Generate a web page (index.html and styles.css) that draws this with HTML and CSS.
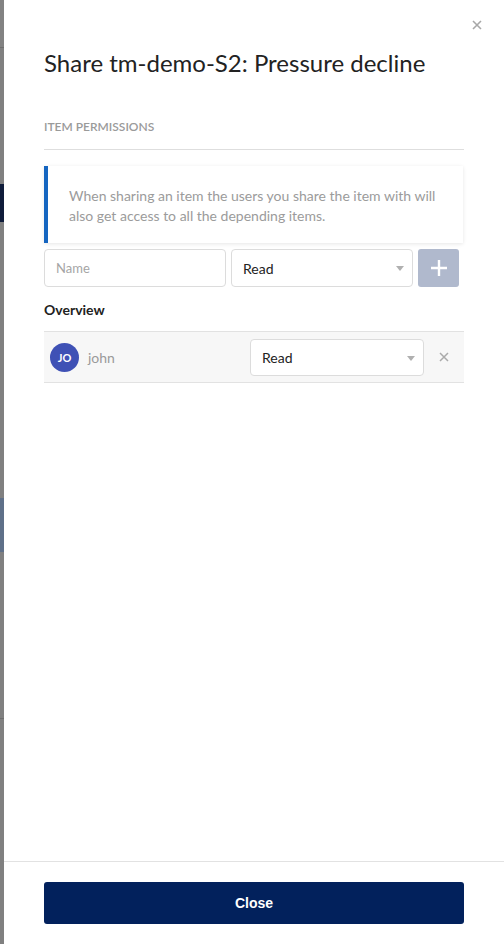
FILE: index.html
```html
<!DOCTYPE html>
<html>
<head>
<meta charset="utf-8">
<link rel="stylesheet" href="styles.css">
</head>
<body>
<div class="page">
  <div class="backdrop">
    <div class="bd-seg bd-top"></div>
    <div class="bd-line"></div>
    <div class="bd-seg bd-a"></div>
    <div class="bd-navy"></div>
    <div class="bd-seg bd-b"></div>
    <div class="bd-blue"></div>
    <div class="bd-seg bd-c"></div>
    <div class="bd-line"></div>
    <div class="bd-seg bd-fill"></div>
  </div>
  <div class="panel">
    <button class="x-close" aria-label="Close">
      <svg width="10" height="10" viewBox="0 0 10 10"><path d="M1 1L9 9M9 1L1 9" stroke="#a8a8a8" stroke-width="1.6"/></svg>
    </button>
    <div class="body">
      <h1 class="title">Share tm-demo-S2: Pressure decline</h1>
      <div class="section-label">ITEM PERMISSIONS</div>
      <div class="info">When sharing an item the users you share the item with will also get access to all the depending items.</div>
      <div class="add-row">
        <div class="input placeholder">Name</div>
        <div class="input select">Read<span class="caret"></span></div>
        <div class="add-btn">
          <svg width="18" height="18" viewBox="0 0 18 18"><path d="M9 1V17M1 9H17" stroke="#fff" stroke-width="2.4"/></svg>
        </div>
      </div>
      <div class="overview">Overview</div>
      <div class="user-row">
        <div class="avatar">JO</div>
        <div class="user-name">john</div>
        <div class="input select small">Read<span class="caret"></span></div>
        <div class="remove">
          <svg width="10" height="10" viewBox="0 0 10 10"><path d="M1 1L9 9M9 1L1 9" stroke="#aaa" stroke-width="1.5"/></svg>
        </div>
      </div>
    </div>
    <div class="footer">
      <button class="close-btn">Close</button>
    </div>
  </div>
</div>
</body>
</html>
```
FILE: styles.css
```css
* { box-sizing: border-box; }
html, body { margin: 0; padding: 0; }
body { font-family: Lato, "Open Sans", sans-serif; background: #fff; }
.page { display: flex; width: 504px; height: 944px; overflow: hidden; }
.backdrop { width: 4px; display: flex; flex-direction: column; background: #808080; }
.bd-top { height: 47px; background: #828282; }
.bd-line { height: 1px; background: #6e6e6e; }
.bd-a { height: 136px; background: #808080; }
.bd-navy { height: 38px; background: #0f1c3a; }
.bd-b { height: 276px; background: #808080; }
.bd-blue { height: 54px; background: #5f7089; }
.bd-c { height: 166px; background: #808080; }
.bd-fill { flex: 1; background: #808080; }
.panel { flex: 1; display: flex; flex-direction: column; position: relative; background: #fff; }
.x-close { position: absolute; top: 20px; right: 22px; border: 0; background: none; padding: 0; width: 10px; height: 10px; display: flex; }
.body { flex: 1; padding: 48px 40px 0 40px; }
.title { margin: 0; font-size: 24px; font-weight: 400; color: #222; line-height: 30px; }
.section-label { margin-top: 42px; font-size: 12px; font-weight: 600; color: #9a9a9a; padding-bottom: 15px; border-bottom: 1px solid #dedede; line-height: 14px; }
.info { margin-top: 16px; margin-right: 1px; border-left: 4px solid #1565c0; box-shadow: 0 1px 4px rgba(0,0,0,0.10); padding: 20px 20px 17px 21px; font-size: 14px; line-height: 20px; color: #9b9b9b; }
.add-row { display: flex; gap: 5px; margin-top: 6px; height: 38px; }
.input { height: 38px; width: 182px; border: 1px solid #dcdcdc; border-radius: 4px; background: #fff; font-size: 14px; color: #222; padding: 0 11px; display: flex; align-items: center; position: relative; }
.placeholder { color: #a5a5a5; font-size: 13px; }
.caret { position: absolute; right: 8px; top: 16px; width: 0; height: 0; border-left: 4px solid transparent; border-right: 4px solid transparent; border-top: 5px solid #b0b0b0; }
.add-btn { width: 41px; height: 38px; background: #b0b9cd; border-radius: 3px; display: flex; align-items: center; justify-content: center; }
.overview { margin-top: 14px; font-size: 14px; font-weight: 700; color: #222; line-height: 18px; }
.user-row { margin-top: 12px; height: 52px; background: #f7f7f7; border-top: 1px solid #e2e2e2; border-bottom: 1px solid #e2e2e2; display: flex; align-items: center; padding-left: 6px; }
.avatar { width: 29px; height: 29px; border-radius: 50%; background: #3f51b5; color: #fff; font-size: 11px; font-weight: 700; display: flex; align-items: center; justify-content: center; }
.user-name { margin-left: 9px; font-size: 14px; color: #9a9a9a; flex: 1; }
.input.small { width: 174px; height: 37px; }
.remove { width: 40px; display: flex; justify-content: center; align-items: center; }
.footer { border-top: 1px solid #e2e2e2; padding: 20px 40px 20px 40px; height: 83px; }
.close-btn { width: 100%; height: 42px; background: #02215c; color: #fff; border: 0; border-radius: 3px; font-family: "Liberation Sans", Arial, sans-serif; font-weight: 700; font-size: 14px; }
```
